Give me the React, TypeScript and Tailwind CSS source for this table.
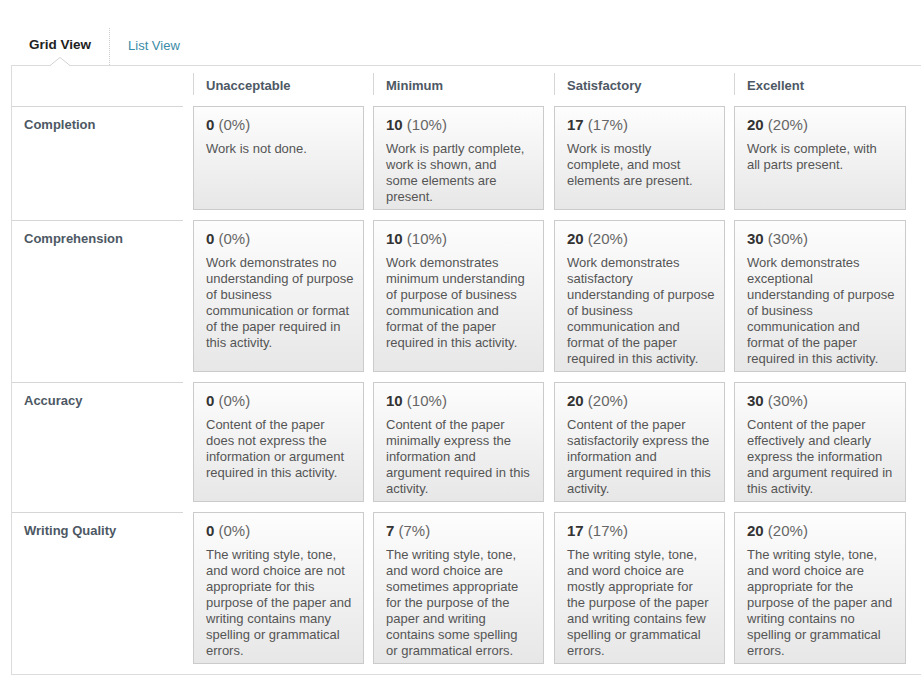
import React from "react";

type Cell = { points: number; pct: string; lines: string[] };
type Row = { label: string; cells: Cell[] };

const levels = ["Unacceptable", "Minimum", "Satisfactory", "Excellent"];

// line breaks kept as they appear in the rubric
const rows: Row[] = [
  {
    label: "Completion",
    cells: [
      { points: 0, pct: "0%", lines: ["Work is not done."] },
      { points: 10, pct: "10%", lines: ["Work is partly complete,", "work is shown, and", "some elements are", "present."] },
      { points: 17, pct: "17%", lines: ["Work is mostly", "complete, and most", "elements are present."] },
      { points: 20, pct: "20%", lines: ["Work is complete, with", "all parts present."] },
    ],
  },
  {
    label: "Comprehension",
    cells: [
      {
        points: 0,
        pct: "0%",
        lines: ["Work demonstrates no", "understanding of purpose", "of business", "communication or format", "of the paper required in", "this activity."],
      },
      {
        points: 10,
        pct: "10%",
        lines: ["Work demonstrates", "minimum understanding", "of purpose of business", "communication and", "format of the paper", "required in this activity."],
      },
      {
        points: 20,
        pct: "20%",
        lines: ["Work demonstrates", "satisfactory", "understanding of purpose", "of business", "communication and", "format of the paper", "required in this activity."],
      },
      {
        points: 30,
        pct: "30%",
        lines: ["Work demonstrates", "exceptional", "understanding of purpose", "of business", "communication and", "format of the paper", "required in this activity."],
      },
    ],
  },
  {
    label: "Accuracy",
    cells: [
      { points: 0, pct: "0%", lines: ["Content of the paper", "does not express the", "information or argument", "required in this activity."] },
      { points: 10, pct: "10%", lines: ["Content of the paper", "minimally express the", "information and", "argument required in this", "activity."] },
      { points: 20, pct: "20%", lines: ["Content of the paper", "satisfactorily express the", "information and", "argument required in this", "activity."] },
      { points: 30, pct: "30%", lines: ["Content of the paper", "effectively and clearly", "express the information", "and argument required in", "this activity."] },
    ],
  },
  {
    label: "Writing Quality",
    cells: [
      {
        points: 0,
        pct: "0%",
        lines: ["The writing style, tone,", "and word choice are not", "appropriate for this", "purpose of the paper and", "writing contains many", "spelling or grammatical", "errors."],
      },
      {
        points: 7,
        pct: "7%",
        lines: ["The writing style, tone,", "and word choice are", "sometimes appropriate", "for the purpose of the", "paper and writing", "contains some spelling", "or grammatical errors."],
      },
      {
        points: 17,
        pct: "17%",
        lines: ["The writing style, tone,", "and word choice are", "mostly appropriate for", "the purpose of the paper", "and writing contains few", "spelling or grammatical", "errors."],
      },
      {
        points: 20,
        pct: "20%",
        lines: ["The writing style, tone,", "and word choice are", "appropriate for the", "purpose of the paper and", "writing contains no", "spelling or grammatical", "errors."],
      },
    ],
  },
];

// label column + four rating columns; each track includes the gutter after it
const cols = "grid grid-cols-[181px_180px_181px_180px_172px]";

const App = () => {
  return (
    <div className="w-[921px] h-[686px] overflow-hidden bg-white font-['Liberation_Sans',Arial,sans-serif]">
      {/* Tabs */}
      <div className="flex ml-[11px] pt-[28px]">
        <div className="relative h-[37px] px-[18px] flex items-center pb-[2px] text-[13.5px] font-bold text-[#222] border-r border-dotted border-[#ccc]">
          Grid View
          <svg
            className="absolute bottom-[-1px] left-1/2 -translate-x-1/2"
            width="20"
            height="9"
            viewBox="0 0 20 9"
          >
            <polygon points="0,9 10,1 20,9" fill="#fff" />
            <polyline points="0,8.5 10,0.5 20,8.5" fill="none" stroke="#d4d4d4" strokeWidth="1" />
          </svg>
        </div>
        <div className="h-[37px] px-[18px] flex items-center pb-[2px] text-[13px] text-[#3a8ba6]">
          List View
        </div>
      </div>

      {/* Grid panel */}
      <div className="ml-[11px] w-[930px] border border-[#dcdcdc] pb-[10px]">
        {/* Header */}
        <div className={`${cols} pt-[7px] h-[40px]`}>
          <div />
          {levels.map((level) => (
            <div
              key={level}
              className="h-[22px] border-l border-[#d6d6d6] pl-[12px] flex items-center pt-[3px] text-[13px] font-bold text-[#4d5864]"
            >
              {level}
            </div>
          ))}
        </div>

        {/* Rows */}
        <div className="flex flex-col gap-[10px]">
          {rows.map((row) => (
            <div key={row.label} className={cols}>
              <div className="w-[171px] border-t border-[#d6d6d6] pl-[12px] pt-[8px] text-[13px] font-bold text-[#4d5864] leading-[20px]">
                {row.label}
              </div>
              {row.cells.map((cell, i) => (
                <div
                  key={i}
                  className={`${i === 3 ? "w-[172px]" : "w-[171px]"} border border-[#cbcbcb] bg-linear-to-b from-[#fdfdfd] to-[#e7e7e7] pl-[12px] pr-[6px] pt-[8px] pb-[4px]`}
                >
                  <div className="text-[15px] leading-[20px] text-[#666]">
                    <span className="font-bold text-[#333]">{cell.points}</span> ({cell.pct})
                  </div>
                  <div className="mt-[6px] text-[13px] leading-[16px] text-[#555]">
                    {cell.lines.map((line, j) => (
                      <div key={j} className="whitespace-nowrap">
                        {line}
                      </div>
                    ))}
                  </div>
                </div>
              ))}
            </div>
          ))}
        </div>
      </div>
    </div>
  );
};

export default App;
